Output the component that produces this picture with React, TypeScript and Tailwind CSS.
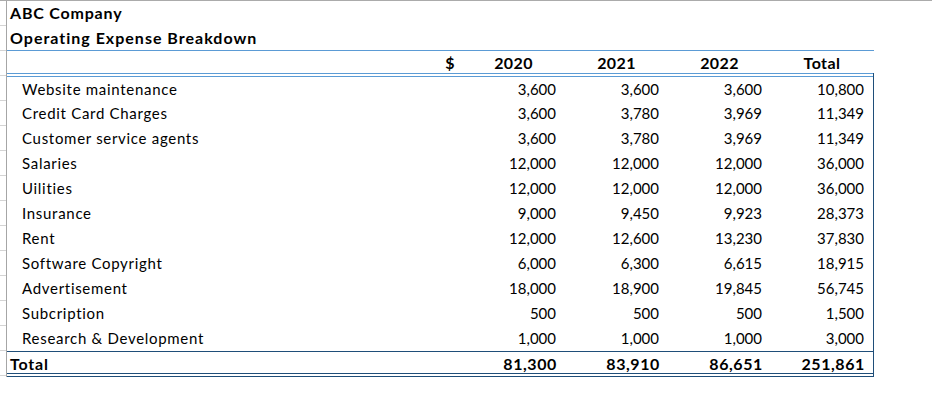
import React from "react";

const rows: [string, number, number, number, number][] = [
  ["Website maintenance", 3600, 3600, 3600, 10800],
  ["Credit Card Charges", 3600, 3780, 3969, 11349],
  ["Customer service agents", 3600, 3780, 3969, 11349],
  ["Salaries", 12000, 12000, 12000, 36000],
  ["Uilities", 12000, 12000, 12000, 36000],
  ["Insurance", 9000, 9450, 9923, 28373],
  ["Rent", 12000, 12600, 13230, 37830],
  ["Software Copyright", 6000, 6300, 6615, 18915],
  ["Advertisement", 18000, 18900, 19845, 56745],
  ["Subcription", 500, 500, 500, 1500],
  ["Research & Development", 1000, 1000, 1000, 3000],
];

const totals = [81300, 83910, 86651, 251861];

const fmt = (n: number) => n.toLocaleString("en-US");

const cols = "grid grid-cols-[455px_103px_103px_103px_102px]";

export default function App() {
  return (
    <main className="h-[393px] w-[932px] overflow-hidden bg-white font-['Lato','Liberation_Sans',sans-serif] text-[15px] text-black">
      <div className="h-px bg-[#ababab]" />
      <div className="flex">
        {/* row gridlines of the hidden column on the left */}
        <div className="flex w-[6px] flex-col">
          {Array.from({ length: 15 }).map((_, i) => (
            <div key={i} className="h-[25px] border-b border-[#d4d4d4]" />
          ))}
        </div>
        <div className="w-px bg-[#a6a6a6]" />

        <section className="w-[867px]">
          <div className="flex h-[24px] items-center pl-[3px] text-[16px] font-bold tracking-[0.8px]">
            ABC Company
          </div>
          <div className="flex h-[25px] items-center pl-[3px] text-[16px] font-bold tracking-[1px]">
            Operating Expense Breakdown
          </div>
          <div className="h-px bg-[#5b9bd5]" />

          <div className={`${cols} h-[22px] items-center text-[16px] font-bold tracking-[0.4px]`}>
            <div className="pr-[7px] text-right">$</div>
            <div className="text-center">2020</div>
            <div className="text-center">2021</div>
            <div className="text-center">2022</div>
            <div className="text-center">Total</div>
          </div>

          <div className="border-r border-[#1f4e79]">
            <div className="h-px bg-[#5b9bd5]" />
            <div className="h-[2px]" />
            <div className="h-px bg-[#5b9bd5]" />

            {rows.map(([label, ...vals], i) => (
              <div
                key={label}
                className={`${cols} items-center ${i === 0 ? "h-[24px]" : "h-[25px]"}`}
              >
                <div className="pl-[15px] tracking-[0.7px]">{label}</div>
                {vals.map((v, j) => (
                  <div key={j} className="pr-[9px] text-right">
                    {fmt(v)}
                  </div>
                ))}
              </div>
            ))}

            <div className="h-px bg-[#1f4e79]" />
            <div className={`${cols} h-[21px] items-center text-[16px] font-bold`}>
              <div className="pl-[3px] tracking-[0.8px]">Total</div>
              {totals.map((v, j) => (
                <div key={j} className="pr-[8px] text-right tracking-[0.6px]">
                  {fmt(v)}
                </div>
              ))}
            </div>
            <div className="h-px bg-[#1f4e79]" />
            <div className="h-[2px]" />
            <div className="h-px bg-[#1f4e79]" />
          </div>
        </section>
      </div>
    </main>
  );
}
